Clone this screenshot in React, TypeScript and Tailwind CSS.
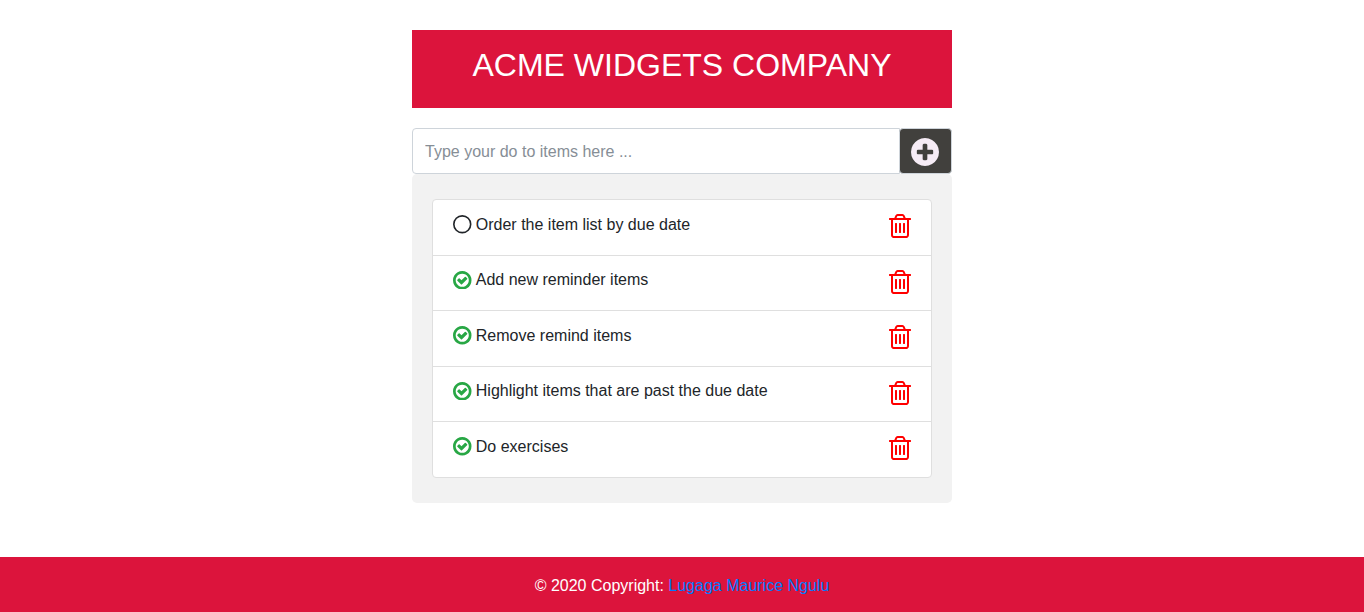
import { useState } from 'react';

const RING =
  'q0 209-103 385.5t-279.5 279.5-385.5 103-385.5-103-279.5-279.5-103-385.5 103-385.5 279.5-279.5 385.5-103 385.5 103 279.5 279.5 103 385.5z';

function PlusIcon() {
  return (
    <svg viewBox="128 128 1536 1536" className="size-[28px] fill-[#f6ecf6]">
      <path d={'M1344 960v-128q0-26-19-45t-45-19h-256v-256q0-26-19-45t-45-19h-128q-26 0-45 19t-19 45v256h-256q-26 0-45 19t-19 45v128q0 26 19 45t45 19h256v256q0 26 19 45t45 19h128q26 0 45-19t19-45v-256h256q26 0 45-19t19-45zm320-64' + RING} />
    </svg>
  );
}

function CheckIcon() {
  return (
    <svg viewBox="128 128 1536 1536" className="size-[18.5px] fill-[#28a745]">
      <path d={'M1299 813l-422 422q-19 19-45 19t-45-19l-294-294q-19-19-19-45t19-45l102-102q19-19 45-19t45 19l147 147 275-275q19-19 45-19t45 19l102 102q19 19 19 45t-19 45zm141 83q0-148-73-273t-198-198-273-73-273 73-198 198-73 273 73 273 198 198 273 73 273-73 198-198 73-273zm224 0' + RING} />
    </svg>
  );
}

function CircleIcon() {
  return (
    <svg viewBox="128 128 1536 1536" className="size-[18.5px] fill-none stroke-[#212529]">
      <circle cx="896" cy="896" r="700" strokeWidth="136" />
    </svg>
  );
}

function TrashIcon() {
  return (
    <svg viewBox="192 128 1408 1536" className="h-6 w-[22px] fill-[#ff0000]">
      <path d="M704 736v576q0 14-9 23t-23 9h-64q-14 0-23-9t-9-23v-576q0-14 9-23t23-9h64q14 0 23 9t9 23zm256 0v576q0 14-9 23t-23 9h-64q-14 0-23-9t-9-23v-576q0-14 9-23t23-9h64q14 0 23 9t9 23zm256 0v576q0 14-9 23t-23 9h-64q-14 0-23-9t-9-23v-576q0-14 9-23t23-9h64q14 0 23 9t9 23zm128 724v-948h-896v948q0 22 7 40.5t14.5 27 10.5 8.5h832q3 0 10.5-8.5t14.5-27 7-40.5zm-672-1076h448l-48-117q-7-9-17-11h-317q-10 2-17 11zm928 32v64q0 14-9 23t-23 9h-96v948q0 83-47 143.5t-113 60.5h-832q-66 0-113-58.5t-47-141.5v-952h-96q-14 0-23-9t-9-23v-64q0-14 9-23t23-9h309l70-167q15-37 54-63t79-26h320q40 0 79 26t54 63l70 167h309q14 0 23 9t9 23z" />
    </svg>
  );
}

const initialItems = [
  { text: 'Order the item list by due date', done: false },
  { text: 'Add new reminder items', done: true },
  { text: 'Remove remind items', done: true },
  { text: 'Highlight items that are past the due date', done: true },
  { text: 'Do exercises', done: true },
];

export default function App() {
  const [items, setItems] = useState(initialItems);
  const [draft, setDraft] = useState('');

  const add = () => {
    if (!draft.trim()) return;
    setItems([...items, { text: draft.trim(), done: false }]);
    setDraft('');
  };
  const toggle = (index: number) =>
    setItems(items.map((item, i) => (i === index ? { ...item, done: !item.done } : item)));
  const remove = (index: number) => setItems(items.filter((_, i) => i !== index));

  return (
    <div className="flex min-h-screen flex-col bg-white font-['Liberation_Sans',Arial,sans-serif] text-base text-[#212529]">
      <main className="mx-auto w-[540px] grow pt-[30px]">
        <header className="h-[78px] bg-[#dc143c] pt-4 text-center">
          <h1 className="text-[32px] leading-[38.4px] text-white">ACME WIDGETS COMPANY</h1>
        </header>
        <div className="mt-5 flex h-[46px]">
          <input
            value={draft}
            onChange={(e) => setDraft(e.target.value)}
            placeholder="Type your do to items here ..."
            className="min-w-0 grow rounded-l border border-[#ced4da] bg-white px-3 pt-[2px] placeholder:text-[#868e96] focus:outline-none"
          />
          <button
            onClick={add}
            aria-label="Add item"
            className="-ml-px flex w-[53px] items-center justify-center rounded border border-[#ced4da] bg-[#41403d] pt-px pr-px"
          >
            <PlusIcon />
          </button>
        </div>
        <section className="rounded-[5px] bg-[#f2f2f2] px-5 py-[25px]">
          <ul className="overflow-hidden rounded border border-[#dfdfdf] bg-white">
            {items.map((item, i) => (
              <li
                key={i}
                className="flex h-[55.5px] items-start justify-between border-b border-[#dfdfdf] px-5 pt-3 last:h-[55px] last:border-b-0"
              >
                <button onClick={() => toggle(i)} className="flex items-center gap-[4.3px] pt-[0.5px]">
                  {item.done ? <CheckIcon /> : <CircleIcon />}
                  <span className="leading-6">{item.text}</span>
                </button>
                <button onClick={() => remove(i)} aria-label="Delete item" className="pt-[2px]">
                  <TrashIcon />
                </button>
              </li>
            ))}
          </ul>
        </section>
      </main>
      <footer className="h-[55px] bg-[#dc143c] pt-[17px] text-center leading-6 text-white">
        © 2020 Copyright: <a href="#" className="text-[#007bff]">Lugaga Maurice Ngulu</a>
      </footer>
    </div>
  );
}
